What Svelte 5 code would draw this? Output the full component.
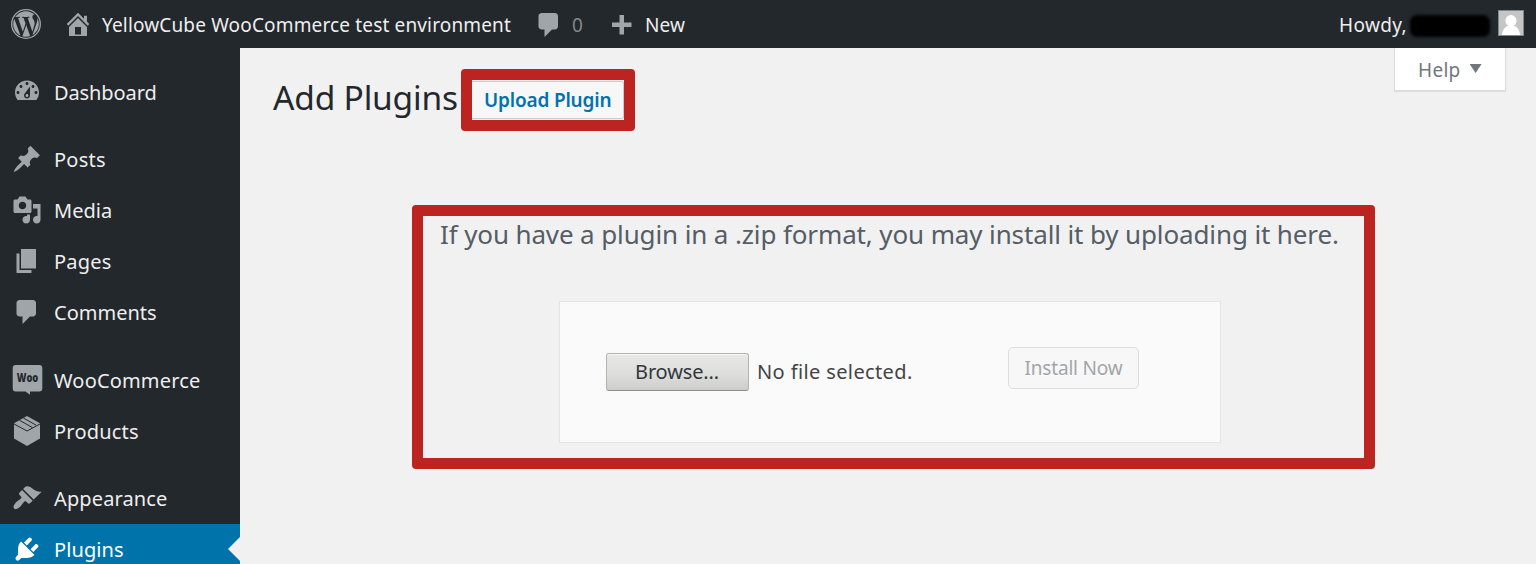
<script>
  const icons = {
    dashboard: 'M3.76 16h12.48c1.1-1.37 1.76-3.11 1.76-5 0-4.42-3.58-8-8-8s-8 3.58-8 8c0 1.89.66 3.63 1.76 5zM10 4c.55 0 1 .45 1 1s-.45 1-1 1-1-.45-1-1 .45-1 1-1zM6 6c.55 0 1 .45 1 1s-.45 1-1 1-1-.45-1-1 .45-1 1-1zm8 0c.55 0 1 .45 1 1s-.45 1-1 1-1-.45-1-1 .45-1 1-1zm-5.37 5.55L12 7v6c0 1.1-.9 2-2 2s-2-.9-2-2c0-.57.24-1.08.63-1.45zM4 10c.55 0 1 .45 1 1s-.45 1-1 1-1-.45-1-1 .45-1 1-1zm12 0c.55 0 1 .45 1 1s-.45 1-1 1-1-.45-1-1 .45-1 1-1zm-5 3c0-.55-.45-1-1-1s-1 .45-1 1 .45 1 1 1 1-.45 1-1z',
    post: 'M10.44 3.02l1.82-1.82 6.36 6.35-1.83 1.82c-1.05-.68-2.48-.57-3.41.36l-.75.75c-.92.93-1.04 2.35-.35 3.41l-1.83 1.82-2.41-2.41-2.8 2.79c-.42.42-3.38 2.71-3.8 2.29s1.86-3.39 2.28-3.81l2.79-2.79L4.1 9.36l1.83-1.82c1.05.69 2.48.57 3.4-.36l.75-.75c.93-.92 1.05-2.35.36-3.41z',
    media: 'M13 11V4c0-.55-.45-1-1-1h-1.67L9 1H5L3.67 3H2c-.55 0-1 .45-1 1v7c0 .55.45 1 1 1h10c.55 0 1-.45 1-1zM7 4.5c1.38 0 2.5 1.12 2.5 2.5S8.38 9.5 7 9.5 4.5 8.38 4.5 7 5.62 4.5 7 4.5zM14 6h5v10.5c0 1.38-1.12 2.5-2.5 2.5S14 17.88 14 16.5s1.12-2.5 2.5-2.5c.17 0 .34.02.5.05V9h-3V6zm-4 8.05V13h2v3.5c0 1.38-1.12 2.5-2.5 2.5S7 17.88 7 16.5 8.12 14 9.5 14c.17 0 .34.02.5.05z',
    pages: 'M6 15V2h10v13H6zm-1 1h8v2H3V5h2v11z',
    comment: 'M5 2h9c1.1 0 2 .9 2 2v7c0 1.1-.9 2-2 2h-2l-5 5v-5H5c-1.1 0-2-.9-2-2V4c0-1.1.9-2 2-2z',
    appearance: 'M14.48 11.06L7.41 3.99l1.5-1.5c.5-.56 2.3-.47 3.51.32 1.21.8 1.43 1.28 2.91 2.1 1.18.64 2.45 1.26 4.45.85zm-.71.71L6.7 4.7 4.93 6.47c-.39.39-.39 1.02 0 1.41l1.06 1.06c.39.39.39 1.03 0 1.42-.6.6-1.43 1.11-2.21 1.69-.35.26-.7.53-1.01.84C1.43 14.23.4 16.08 1.4 17.07c.99 1 2.84-.03 4.18-1.36.31-.31.58-.66.85-1.02.57-.78 1.08-1.61 1.69-2.21.39-.39 1.02-.39 1.41 0l1.06 1.06c.39.39 1.02.39 1.41 0z',
    plugins: 'M13.11 4.36L9.87 7.6 8 5.73l3.24-3.24c.35-.34 1.05-.2 1.56.32.52.51.66 1.21.31 1.55zm-8 1.77l.91-1.12 9.01 9.01-1.19.84c-.71.71-2.63 1.16-3.82 1.16H6.14L4.9 17.26c-.59.59-1.54.59-2.12 0-.59-.58-.59-1.53 0-2.12l1.24-1.24v-3.88c0-1.13.4-3.19 1.09-3.89zm7.26 3.97l3.24-3.24c.34-.35 1.04-.21 1.55.31.52.51.66 1.21.31 1.55l-3.24 3.25z',
    home: 'M16 8.5l1.53 1.53-1.06 1.06L10 4.6l-6.47 6.49-1.06-1.06L10 2.5l4 4v-2h2v4zm-6-2.46l6 5.99V18H4v-5.97zM12 17v-5H8v5h4z',
    plus: 'M17 7v3h-5v5H9v-5H4V7h5V2h3v5h5z'
  };

  // Menu sections; tracking is the letter spacing of each label in px.
  const sections = [
    [{ label: 'Dashboard', icon: 'dashboard', tracking: -0.1 }],
    [
      { label: 'Posts', icon: 'post', tracking: 0.25 },
      { label: 'Media', icon: 'media', tracking: 0.03 },
      { label: 'Pages', icon: 'pages', tracking: 0.2 },
      { label: 'Comments', icon: 'comment', tracking: 0 }
    ],
    [
      { label: 'WooCommerce', icon: 'woo', tracking: 0.17 },
      { label: 'Products', icon: 'box', tracking: 0.21 }
    ],
    [
      { label: 'Appearance', icon: 'appearance', tracking: 0.12 },
      { label: 'Plugins', icon: 'plugins', tracking: 0.09, current: true }
    ]
  ];
</script>

{#snippet glyph(name)}
  <svg class="glyph {name}" viewBox="0 0 20 20" aria-hidden="true"><path fill-rule="evenodd" d={icons[name]} /></svg>
{/snippet}

<div class="screen">
  <header class="bar">
    <svg class="wp" viewBox="0 0 24 24" aria-hidden="true">
      <circle cx="12" cy="12" r="11.45" fill="none" stroke="currentColor" stroke-width="1.1" />
      <path transform="translate(.6 .6) scale(.95)" d="M21.469 6.825c.84 1.537 1.318 3.3 1.318 5.175 0 3.979-2.156 7.456-5.363 9.325l3.295-9.527c.615-1.54.82-2.771.82-3.864 0-.405-.026-.78-.07-1.11m-7.981.105c.647-.03 1.232-.105 1.232-.105.582-.075.514-.93-.067-.899 0 0-1.755.135-2.88.135-1.064 0-2.85-.15-2.85-.15-.585-.03-.661.855-.075.885 0 0 .54.061 1.125.09l1.68 4.605-2.37 7.08L5.354 6.9c.649-.03 1.234-.1 1.234-.1.585-.075.516-.93-.065-.896 0 0-1.746.138-2.874.138-.2 0-.438-.008-.69-.015C4.911 3.15 8.235 1.215 12 1.215c2.809 0 5.365 1.072 7.286 2.833-.046-.003-.091-.009-.141-.009-1.06 0-1.812.923-1.812 1.914 0 .89.513 1.643 1.06 2.531.411.72.89 1.643.89 2.977 0 .915-.354 1.994-.821 3.479l-1.075 3.585-3.9-11.61.001.014zM12 22.784c-1.059 0-2.081-.153-3.048-.437l3.237-9.406 3.315 9.087c.024.053.05.101.078.149-1.12.393-2.325.609-3.582.609M1.211 12c0-1.564.336-3.05.935-4.39L7.29 21.709C3.694 19.96 1.212 16.271 1.211 12z" />
    </svg>
    <a class="site">{@render glyph('home')}<span>YellowCube WooCommerce test environment</span></a>
    <a class="count">{@render glyph('comment')}<span>0</span></a>
    <a class="new">{@render glyph('plus')}<span>New</span></a>
    <div class="account">
      <span class="howdy">Howdy,</span>
      <span class="name"></span>
      <svg class="avatar" viewBox="0 0 26 26" aria-hidden="true">
        <rect x=".5" y=".5" width="25" height="25" fill="#c5c5c5" stroke="#82878c" />
        <circle cx="13" cy="10.7" r="5.6" fill="#fff" />
        <path d="M4 25c.4-5 3-8.500 6.500-9.500h5c3.500 1 6.100 4.500 6.500 9.500z" fill="#fff" />
      </svg>
    </div>
  </header>

  <div class="body">
    <nav>
      {#each sections as section}
        <ul>
          {#each section as item}
            <li class:current={item.current}>
              {#if item.icon === 'woo'}
                <svg class="glyph" viewBox="0 0 30 30" aria-hidden="true">
                  <path d="M3.700 0h23.600a3 3 0 0 1 3 3v20.500a3 3 0 0 1-3 3H18v3.200l-4.500-3.200H3.700a3 3 0 0 1-3-3V3a3 3 0 0 1 3-3z" />
                  <text class="woo" x="4.800" y="17.400" textLength="21.500" lengthAdjust="spacingAndGlyphs">Woo</text>
                </svg>
              {:else if item.icon === 'box'}
                <svg class="glyph" viewBox="0 0 30 30" aria-hidden="true">
                  <path d="M15 0l13 7.200v15.300L15 30 2 22.500V7.200z" />
                  <path class="seam" d="M1.500 7.700L15 15l13.500-7.300M7.500 4.300l13 7.300M11.500 2.100l12.500 7" />
                </svg>
              {:else}
                {@render glyph(item.icon)}
              {/if}
              <span style:letter-spacing="{item.tracking}px">{item.label}</span>
            </li>
          {/each}
        </ul>
      {/each}
    </nav>

    <main>
      <div class="head">
        <h1>Add Plugins</h1>
        <div class="frame action"><button class="upload">Upload Plugin</button></div>
        <button class="help"><span>Help</span><i></i></button>
      </div>
      <section class="frame panel">
        <p>If you have a plugin in a .zip format, you may install it by uploading it here.</p>
        <form>
          <button type="button" class="browse">Browse...</button>
          <span class="file">No file selected.</span>
          <button type="button" class="install" disabled>Install Now</button>
        </form>
      </section>
    </main>
  </div>
</div>

<style>
  :global(body) { overflow: hidden; background: #f1f1f1; }
  .screen { height: 564px; overflow: hidden; font-family: "Noto Sans", "Open Sans", sans-serif; background: #f1f1f1; }
  .screen, .screen * { box-sizing: border-box; }
  button { margin: 0; padding: 0; font-family: inherit; white-space: nowrap; }
  svg { display: block; flex: none; fill: currentColor; }
  .glyph { width: 30px; height: 30px; color: #a0a5aa; overflow: visible; }

  .bar { display: flex; height: 48px; padding-left: 11px; background: #23282d; color: #eee; font-size: 19px; line-height: 51px; white-space: nowrap; }
  .wp { width: 30px; height: 30px; margin-top: 9px; color: #a0a5aa; }
  .bar a { display: flex; }
  .bar .glyph { margin-top: 9px; }
  .site { width: 471px; margin-left: 22px; }
  .site span { margin-left: 9px; letter-spacing: .154px; }
  .bar .comment { margin-top: 10px; }
  .count { width: 72px; }
  .count span { margin-left: 8px; color: #82878c; }
  .bar .plus { margin-top: 12px; }
  .new span { margin-left: 9px; letter-spacing: .1px; }
  .account { display: flex; margin-left: auto; padding-right: 12px; }
  .howdy { width: 71px; letter-spacing: .35px; }
  .name { width: 80px; height: 22px; margin: 15px 8px 0 0; border-radius: 7px; background: #000; filter: blur(1.500px); }
  .avatar { width: 26px; height: 26px; margin-top: 10px; }

  .body { display: flex; height: 516px; }
  nav { flex: none; width: 240px; padding-top: 19px; background: #23282d; overflow: hidden; }
  ul { margin: 0 0 16px; padding: 0; list-style: none; }
  ul:nth-child(2) { margin-bottom: 17px; }
  li { display: flex; height: 51px; padding: 10px 0 0 12px; color: #eee; font-size: 20px; }
  li span { margin: -10px 0 0 12px; line-height: 51px; }
  ul:first-child .glyph { margin-top: -1px; }
  .current { position: relative; background: #0073aa; color: #fff; }
  .current .glyph { color: #fff; }
  .current::after { content: ""; position: absolute; right: 0; top: 13px; border: 12px solid transparent; border-left: 0; border-right-color: #f1f1f1; }
  .woo { fill: #23282d; font: 800 12px "Open Sans", sans-serif; }
  .seam { fill: none; stroke: #23282d; stroke-width: 1; }

  main { flex: 1; display: flex; flex-direction: column; }
  .head { display: flex; height: 157px; padding: 0 31px 0 33px; }
  h1 { width: 188px; margin: 20px 0 0; color: #23282d; font-size: 33.500px; font-weight: 400; line-height: 59px; letter-spacing: -.19px; white-space: nowrap; }
  .frame { border: 11px solid #bc2422; border-radius: 4px; }
  .action { width: 174px; height: 62px; margin-top: 21px; }
  .upload { display: block; width: 152px; height: 38px; border: 1px solid #ccc; border-left: 0; border-radius: 0 3px 3px 0; padding-left: 12px; background: #f7f7f7; color: #0073aa; font-size: 19px; font-weight: 600; line-height: 36px; letter-spacing: -.18px; text-align: left; margin-top: .500px; }
  .help { display: flex; align-items: center; width: 112px; height: 43px; margin: 0 -1px 0 auto; padding: 1px 0 0 23px; border: 1px solid #ddd; border-top: 0; background: #fff; color: #72777c; font-size: 19px; letter-spacing: .3px; box-shadow: 0 1px 1px rgba(0, 0, 0, .08); }
  .help i { width: 12px; height: 9px; margin: -2px 0 0 9px; background: #72777c; clip-path: polygon(0 0, 100% 0, 50% 100%); }

  .panel { width: 963px; height: 264px; margin-left: 172px; }
  p { margin: -1px 0 48px 17px; color: #555d66; font-size: 26px; line-height: 38px; letter-spacing: -.125px; white-space: nowrap; }
  form { display: flex; width: 662px; height: 142px; margin-left: 136px; padding-left: 46px; border: 1px solid #e5e5e5; background: #fafafa; }
  .browse { width: 143px; height: 38px; margin-top: 51px; border: 1px solid #b4b4ae; border-bottom-color: #8f8f88; border-radius: 3px; padding: 0 1px 1px 0; background: linear-gradient(#e8e8e6, #dededc 55%, #cdcdcc); box-shadow: inset 0 1px #f7f7f6; color: #32373c; font-size: 20px; letter-spacing: -.15px; }
  .file { width: 251px; margin: 51px 0 0 8px; color: #444; font-size: 20px; line-height: 37px; letter-spacing: .38px; }
  .install { width: 131px; height: 42px; margin-top: 45px; border: 1px solid #ddd; border-radius: 5px; background: #f7f7f7; color: #a0a5aa; font-size: 19px; letter-spacing: -.2px; text-shadow: 0 1px #fff; }
</style>
